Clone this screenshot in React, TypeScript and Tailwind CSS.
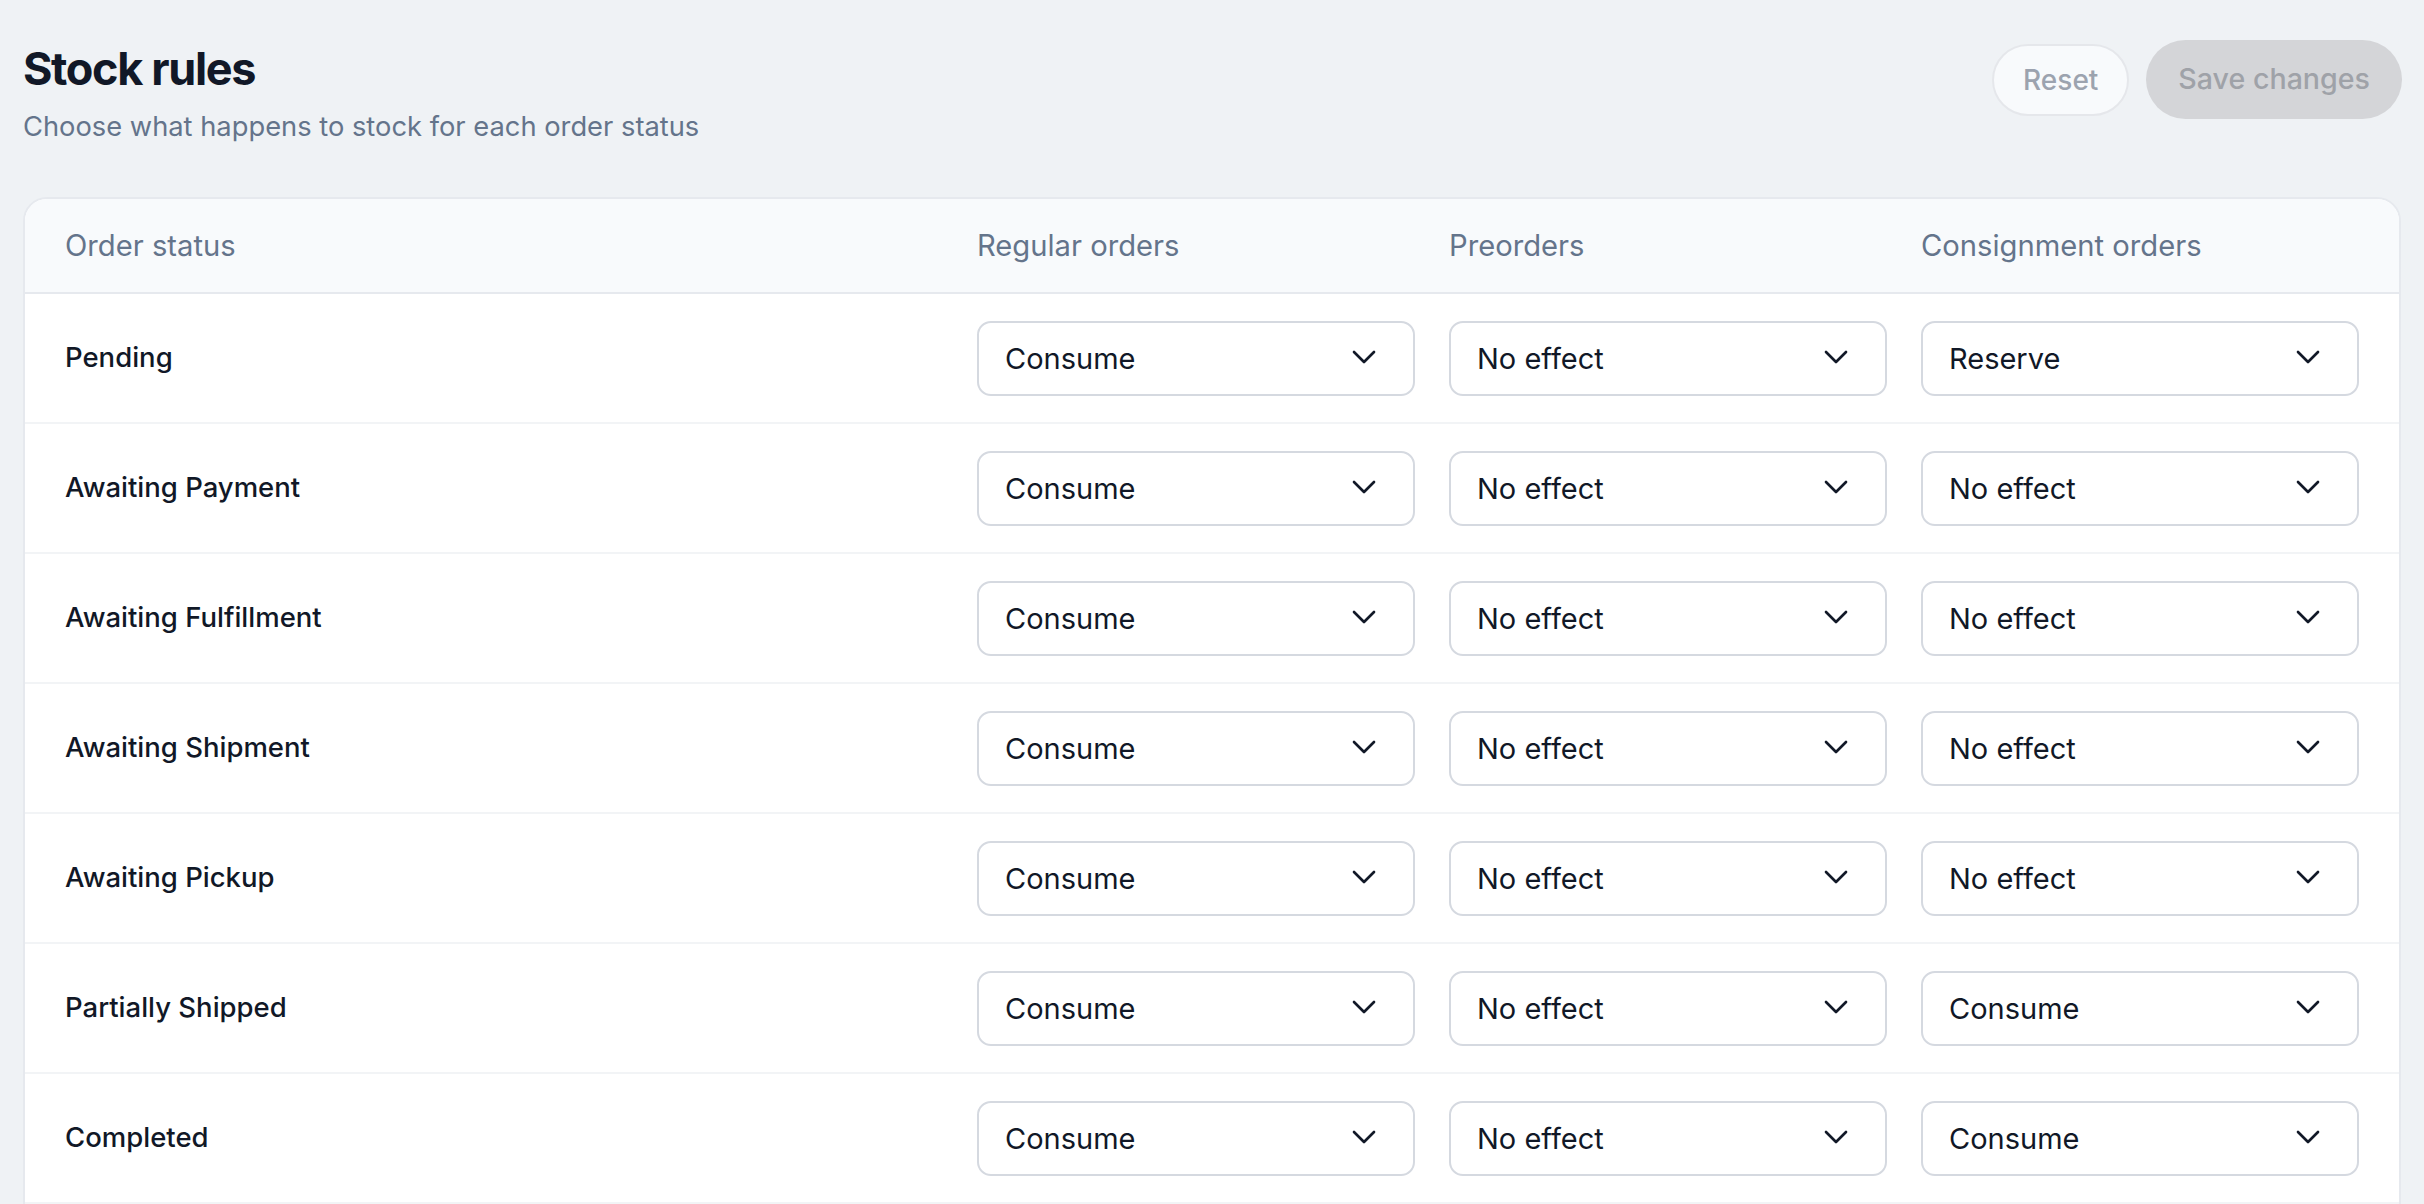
import React from "react";

const rows: [string, string, string, string][] = [
  ["Pending", "Consume", "No effect", "Reserve"],
  ["Awaiting Payment", "Consume", "No effect", "No effect"],
  ["Awaiting Fulfillment", "Consume", "No effect", "No effect"],
  ["Awaiting Shipment", "Consume", "No effect", "No effect"],
  ["Awaiting Pickup", "Consume", "No effect", "No effect"],
  ["Partially Shipped", "Consume", "No effect", "Consume"],
  ["Completed", "Consume", "No effect", "Consume"],
];

function Chevron() {
  return (
    <svg width="40" height="40" viewBox="0 0 24 24" fill="none" stroke="#111827" strokeWidth="1.6" strokeLinecap="round" strokeLinejoin="round" className="-mt-[3px]">
      <path d="m6 9 6 6 6-6" />
    </svg>
  );
}

function Select({ value }: { value: string }) {
  return (
    <div className="flex h-[75px] items-center justify-between rounded-[14px] border-2 border-[#d5d9e0] bg-white pl-[26px] pr-[29px] text-[29px] text-[#111827]">
      <span className="pt-[2px]">{value}</span>
      <Chevron />
    </div>
  );
}

export default function App() {
  return (
    <div className="min-h-screen bg-[#eff2f5] px-[23px] pt-[40px]" style={{ fontFamily: "Inter, 'Noto Sans', sans-serif" }}>
      <div className="flex items-start justify-between">
        <div className="pt-[2px]">
          <h1 className="text-[45px] font-bold leading-[54px] tracking-[-0.03em] text-[#111827]">Stock rules</h1>
          <p className="mt-[10px] text-[27.3px] leading-[42px] text-[#64748b]">Choose what happens to stock for each order status</p>
        </div>
        <div className="-mr-[1px] flex items-center gap-[17px]">
          <button className="h-[72px] rounded-full border-2 border-[#e5e7eb] bg-[#f8fafc] px-[29px] text-[28px] font-medium text-[#9ca3af]">
            Reset
          </button>
          <button className="h-[79px] rounded-full bg-[#d4d5d8] px-[32px] text-[28.6px] font-medium text-[#9fa2a8]">
            Save changes
          </button>
        </div>
      </div>

      <div className="mt-[49px] overflow-hidden rounded-[24px] border-2 border-[#e6e9ee] bg-white pb-[24px]">
        <div className="grid h-[95px] grid-cols-[1fr_438px_438px_438px] items-center gap-x-[34px] border-b-2 border-[#e6e9ee] bg-[#f8fafc] px-[40px] text-[29.2px] text-[#64748b]">
          <div>Order status</div>
          <div>Regular orders</div>
          <div>Preorders</div>
          <div>Consignment orders</div>
        </div>
        {rows.map((r) => (
          <div
            key={r[0]}
            className="grid h-[130px] grid-cols-[1fr_438px_438px_438px] items-center gap-x-[34px] border-b-2 border-[#f2f4f6] px-[40px]"
          >
            <div className="text-[27.5px] font-medium text-[#111827]">{r[0]}</div>
            <Select value={r[1]} />
            <Select value={r[2]} />
            <Select value={r[3]} />
          </div>
        ))}
      </div>
    </div>
  );
}
